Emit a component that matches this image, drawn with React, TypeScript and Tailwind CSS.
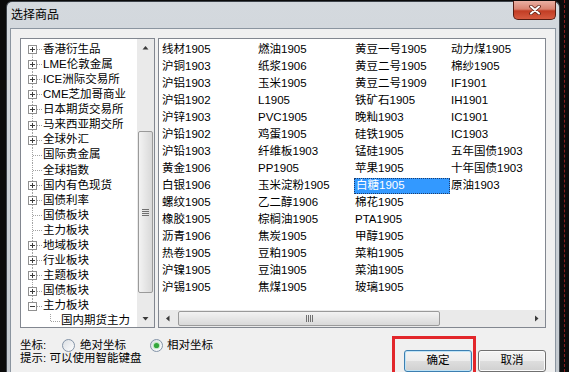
import React from "react";

type TreeNode = { label: string; kind: "plus" | "minus" | "leaf" | "child" };

const treeNodes: TreeNode[] = [
  { label: "香港衍生品", kind: "plus" },
  { label: "LME伦敦金属", kind: "plus" },
  { label: "ICE洲际交易所", kind: "plus" },
  { label: "CME芝加哥商业", kind: "plus" },
  { label: "日本期货交易所", kind: "plus" },
  { label: "马来西亚期交所", kind: "plus" },
  { label: "全球外汇", kind: "plus" },
  { label: "国际贵金属", kind: "leaf" },
  { label: "全球指数", kind: "leaf" },
  { label: "国内有色现货", kind: "plus" },
  { label: "国债利率", kind: "plus" },
  { label: "国债板块", kind: "leaf" },
  { label: "主力板块", kind: "leaf" },
  { label: "地域板块", kind: "plus" },
  { label: "行业板块", kind: "plus" },
  { label: "主题板块", kind: "plus" },
  { label: "国债板块", kind: "plus" },
  { label: "主力板块", kind: "minus" },
  { label: "国内期货主力", kind: "child" },
];

const columns: string[][] = [
  ["线材1905", "沪铜1903", "沪铝1903", "沪铝1902", "沪锌1903", "沪铅1902", "沪铅1903", "黄金1906", "白银1906", "螺纹1905", "橡胶1905", "沥青1906", "热卷1905", "沪镍1905", "沪锡1905"],
  ["燃油1905", "纸浆1906", "玉米1905", "L1905", "PVC1905", "鸡蛋1905", "纤维板1903", "PP1905", "玉米淀粉1905", "乙二醇1906", "棕榈油1905", "焦炭1905", "豆粕1905", "豆油1905", "焦煤1905"],
  ["黄豆一号1905", "黄豆二号1905", "黄豆二号1909", "铁矿石1905", "晚籼1903", "硅铁1905", "锰硅1905", "苹果1905", "白糖1905", "棉花1905", "PTA1905", "甲醇1905", "菜粕1905", "菜油1905", "玻璃1905"],
  ["动力煤1905", "棉纱1905", "IF1901", "IH1901", "IC1901", "IC1903", "五年国债1903", "十年国债1903", "原油1903"],
];

const SELECTED = "白糖1905";

const dot = { stroke: "#a3a3a3", strokeWidth: 1, strokeDasharray: "1 1" };

function TreeGutter({ kind, first, last }: { kind: TreeNode["kind"]; first: boolean; last: boolean }) {
  if (kind === "child") {
    return (
      <svg width={40} height={15} viewBox="0 0 40 15" className="shrink-0">
        <line x1={29.5} y1={0} x2={29.5} y2={7.5} {...dot} />
        <line x1={30} y1={7.5} x2={39} y2={7.5} {...dot} />
      </svg>
    );
  }
  return (
    <svg width={22} height={15} viewBox="0 0 22 15" className="shrink-0">
      <line x1={11.5} y1={first ? 7.5 : 0} x2={11.5} y2={last ? 7.5 : 15} {...dot} />
      <line x1={12} y1={7.5} x2={21} y2={7.5} {...dot} />
      {kind !== "leaf" ? (
        <g>
          <rect x={7.5} y={3.5} width={8} height={8} fill="#ffffff" stroke="#909090" />
          <line x1={9} y1={7.5} x2={14} y2={7.5} stroke="#3d3d3d" />
          {kind === "plus" ? <line x1={11.5} y1={5} x2={11.5} y2={10} stroke="#3d3d3d" /> : null}
        </g>
      ) : null}
    </svg>
  );
}

function Arrow({ dir }: { dir: "up" | "down" | "left" | "right" }) {
  const points = {
    up: "0.5,4.5 3.5,1 6.5,4.5",
    down: "0.5,1 3.5,4.5 6.5,1",
    left: "4.5,0.5 1,3.5 4.5,6.5",
    right: "1,0.5 4.5,3.5 1,6.5",
  }[dir];
  const vertical = dir === "up" || dir === "down";
  return (
    <svg width={vertical ? 7 : 6} height={vertical ? 6 : 7} viewBox={vertical ? "0 0 7 6" : "0 0 6 7"}>
      <polygon points={points} fill="#3a3a3a" />
    </svg>
  );
}

function Radio({ checked }: { checked?: boolean }) {
  return (
    <svg width={13} height={13} viewBox="0 0 13 13" className="shrink-0">
      <defs>
        <linearGradient id={checked ? "rg1" : "rg0"} x1="0" y1="0" x2="1" y2="1">
          <stop offset="0" stopColor="#d9dde2" />
          <stop offset="1" stopColor="#ffffff" />
        </linearGradient>
      </defs>
      <circle cx={6.5} cy={6.5} r={6} fill={`url(#${checked ? "rg1" : "rg0"})`} stroke="#8393a7" />
      {checked ? (
        <>
          <circle cx={6.5} cy={6.5} r={3.6} fill="#bfe8bf" />
          <circle cx={6.5} cy={6.5} r={2.6} fill="#34a63c" />
        </>
      ) : null}
    </svg>
  );
}

export default function App() {
  return (
    <div className="flex h-[372px] w-[569px] overflow-hidden bg-[#0b0b0b] font-['Liberation_Sans','Noto_Sans_CJK_SC',sans-serif] text-[11.5px] leading-none text-black">
      <div className="w-[6px] shrink-0" />

      <div className="mt-[1px] flex w-[554px] shrink-0 flex-col rounded-t-[6px] border-x border-t border-[#3d434a] bg-gradient-to-b from-[#d4d9de] to-[#c4cad0] px-[3px]">
        {/* title bar */}
        <div className="flex h-[26px] shrink-0 items-start">
          <span className="mt-[7px] pl-[1px] text-[12px]">选择商品</span>
          <div className="-mt-[1px] ml-auto flex h-[19px] w-[43px] items-center justify-center rounded-b-[5px] border border-t-0 border-[#561c12] bg-[linear-gradient(180deg,#eab0a3_0%,#d98371_45%,#c23d24_55%,#d65a40_100%)]">
            <svg width={12} height={10} viewBox="0 0 12 10">
              <path d="M2 1.5 L10 8.5 M10 1.5 L2 8.5" stroke="#5b2116" strokeWidth={3.6} strokeLinecap="round" />
              <path d="M2 1.5 L10 8.5 M10 1.5 L2 8.5" stroke="#ffffff" strokeWidth={2} strokeLinecap="round" />
            </svg>
          </div>
        </div>

        {/* client area */}
        <div className="flex flex-1 flex-col border-x border-t border-[#8b95a0] bg-[#f0f0f0] pl-[9px] pt-[9px]">
          <div className="flex shrink-0 gap-[3px]">
            {/* tree */}
            <div className="flex h-[290px] w-[135px] border border-[#828790] bg-white">
              <div className="flex-1 overflow-hidden pt-[3px]">
                {treeNodes.map((node, i) => (
                  <div key={i} className="flex h-[15.1px] items-center whitespace-nowrap">
                    <TreeGutter kind={node.kind} first={i === 0} last={i === treeNodes.length - 2} />
                    <span>{node.label}</span>
                  </div>
                ))}
              </div>
              <div className="flex w-[17px] flex-col bg-[#eaeaea]">
                <div className="flex h-[17px] items-center justify-center">
                  <Arrow dir="up" />
                </div>
                <div className="flex flex-1 flex-col">
                  <div className="h-[75px]" />
                  <div className="mx-[1px] flex h-[162px] flex-col items-center justify-center gap-[1px] rounded-[2px] border border-[#9a9a9a] bg-gradient-to-r from-[#f3f3f3] to-[#d9d9d9]">
                    <div className="h-px w-[7px] bg-[#707070]" />
                    <div className="h-px w-[7px] bg-[#707070]" />
                    <div className="h-px w-[7px] bg-[#707070]" />
                    <div className="h-px w-[7px] bg-[#707070]" />
                  </div>
                </div>
                <div className="flex h-[17px] items-center justify-center">
                  <Arrow dir="down" />
                </div>
              </div>
            </div>

            {/* list */}
            <div className="flex h-[290px] w-[388px] flex-col border border-[#828790] bg-white">
              <div className="grid flex-1 grid-flow-col grid-cols-[96px_97px_96px_96px] grid-rows-[repeat(15,17px)] content-start pl-[2px] pt-[2px]">
                {columns.flatMap((col, ci) =>
                  col.map((item, ri) =>
                    item === SELECTED ? (
                      <div key={`${ci}-${ri}`} className="flex h-[17px] items-center">
                        <span className="flex h-[16px] w-full items-center border border-dotted border-[#1e3c6a] bg-[#3399ff] pl-[1px] text-white">
                          {item}
                        </span>
                      </div>
                    ) : (
                      <div key={`${ci}-${ri}`} className="flex h-[17px] items-center whitespace-nowrap pl-[1px]">
                        {item}
                      </div>
                    )
                  )
                )}
              </div>
              <div className="flex h-[17px] bg-[#eaeaea]">
                <div className="flex w-[17px] items-center justify-center">
                  <Arrow dir="left" />
                </div>
                <div className="flex flex-1 py-[1px] pl-[2px]">
                  <div className="flex w-[262px] items-center justify-center gap-[1px] rounded-[2px] border border-[#9a9a9a] bg-gradient-to-b from-[#f3f3f3] to-[#d9d9d9]">
                    <div className="h-[7px] w-px bg-[#707070]" />
                    <div className="h-[7px] w-px bg-[#707070]" />
                    <div className="h-[7px] w-px bg-[#707070]" />
                    <div className="h-[7px] w-px bg-[#707070]" />
                  </div>
                </div>
                <div className="flex w-[17px] items-center justify-center">
                  <Arrow dir="right" />
                </div>
              </div>
            </div>
          </div>

          {/* bottom */}
          <div className="flex flex-1">
            <div className="flex flex-col pt-[11px]">
              <div className="flex h-[13px] items-center">
                <span className="w-[42px]">坐标:</span>
                <div className="flex w-[88px] items-center gap-[5px]">
                  <Radio />
                  <span>绝对坐标</span>
                </div>
                <div className="flex items-center gap-[4px]">
                  <Radio checked />
                  <span>相对坐标</span>
                </div>
              </div>
              <div className="flex h-[13px] items-center">
                <span>提示: 可以使用智能键盘</span>
              </div>
            </div>

            <div className="ml-auto flex items-start pr-[9px]">
              <div className="mt-[8px] border-[3px] border-[#e2262b] pb-[4px] pl-[9px] pr-[1px] pt-[11px]">
                <div className="flex h-[22px] w-[68px] items-center justify-center rounded-[3px] border border-[#3c7fb1] bg-[linear-gradient(180deg,#f4f4f4_0%,#ececec_50%,#dedede_50%,#d0d0d0_100%)] shadow-[inset_0_0_0_1px_#bfe3f6]">
                  确定
                </div>
              </div>
              <div className="ml-[2px] mt-[22px] flex h-[22px] w-[68px] items-center justify-center rounded-[3px] border border-[#707070] bg-[linear-gradient(180deg,#f4f4f4_0%,#ececec_50%,#dedede_50%,#d0d0d0_100%)] shadow-[inset_0_0_0_1px_#fbfbfb]">
                取消
              </div>
            </div>
          </div>
        </div>
      </div>

      <div className="flex flex-1 justify-center">
        <div className="h-full border-l border-dashed border-[#8a1c1c]" />
      </div>
    </div>
  );
}
